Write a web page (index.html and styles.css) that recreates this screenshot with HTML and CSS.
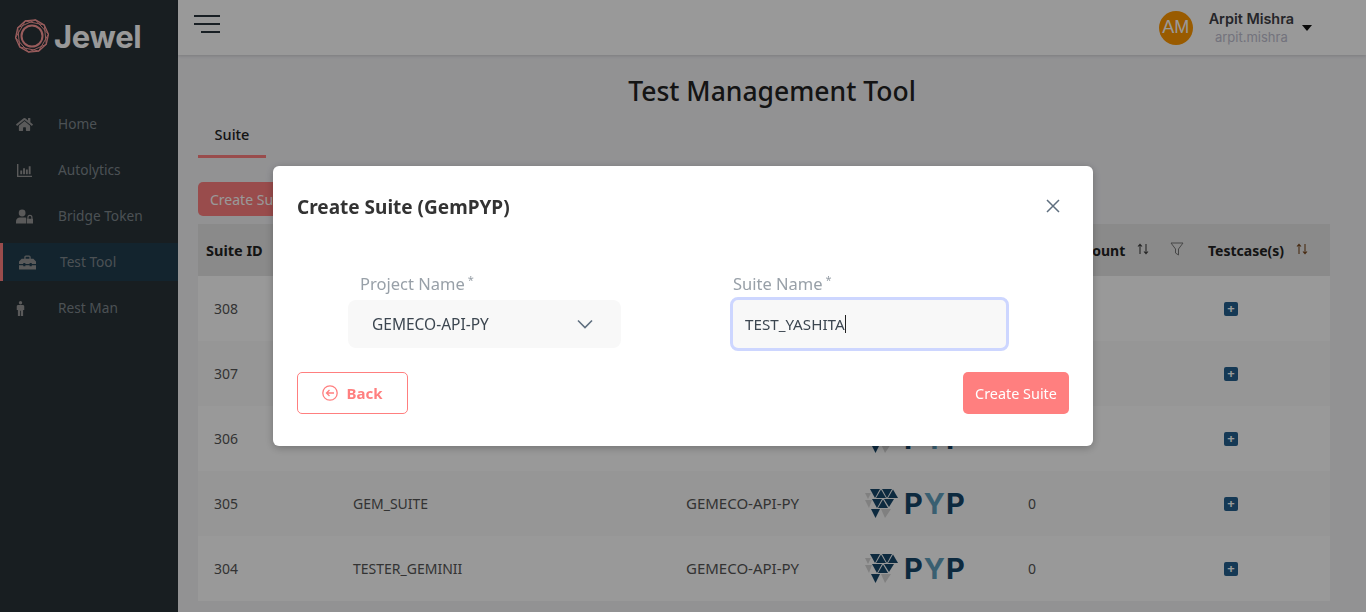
FILE: index.html
```html
<!DOCTYPE html>
<html lang="en">
<head>
	<meta charset="UTF-8">
	<title>Test Management Tool</title>
	<link rel="stylesheet" href="styles.css">
</head>
<body>
<svg class="defs" width="0" height="0">
	<symbol id="pyp-gem" viewBox="0 0 33 29">
		<g fill="#d6d6d6">
			<polygon points="0,4 6,4 3,10"/>
			<polygon points="0,11 7,11 4,19"/>
			<polygon points="16,20 26,20 20,29"/>
		</g>
		<g fill="#16466a">
			<polygon points="5,0 15,0 10,9"/>
			<polygon points="11,9 16,.5 21,9"/>
			<polygon points="17,0 27,0 22,9"/>
			<polygon points="23,9 28,.5 33,9"/>
			<polygon points="7,10 17,10 12,19"/>
			<polygon points="13,19 18,10.500 23,19"/>
			<polygon points="19,10 29,10 24,18"/>
			<polygon points="6,20 15,20 10.500,29"/>
		</g>
	</symbol>
</svg>

<div class="app">
	<aside class="sidebar">
		<div class="brand">
			<svg class="brand-mark" viewBox="0 0 34 34" fill="none" stroke="#ff9a9a" stroke-width=".9">
				<circle cx="17" cy="17" r="10.500" stroke-width="2"/>
				<g transform="rotate(12 17 17)">
					<polygon points="17,.5 32.700,11.900 26.700,30.300 7.300,30.300 1.300,11.900"/>
					<polygon points="26.700,3.700 32.700,22.100 17,33.500 1.300,22.100 7.300,3.700"/>
					<polygon points="17,.5 26.700,3.700 32.700,11.900 32.700,22.100 26.700,30.300 17,33.500 7.300,30.300 1.300,22.100 1.300,11.900 7.300,3.700" stroke-width="1.300"/>
				</g>
			</svg>
			<span class="brand-name">Jewel</span>
		</div>
		<nav class="nav">
			<a class="nav-item">
				<svg class="nav-icon" viewBox="0 0 576 512"><path d="M280.37 148.26L96 300.11V464a16 16 0 0 0 16 16l112.06-.29a16 16 0 0 0 15.92-16V368a16 16 0 0 1 16-16h64a16 16 0 0 1 16 16v95.64a16 16 0 0 0 16 16.05L464 480a16 16 0 0 0 16-16V300L295.67 148.26a12.19 12.19 0 0 0-15.3 0zM571.6 251.47L488 182.56V44.05a12 12 0 0 0-12-12h-56a12 12 0 0 0-12 12v72.61L318.47 43a48 48 0 0 0-61 0L4.34 251.47a12 12 0 0 0-1.6 16.9l25.5 31A12 12 0 0 0 45.15 301l235.22-193.74a12.19 12.19 0 0 1 15.3 0L530.9 301a12 12 0 0 0 16.9-1.6l25.5-31a12 12 0 0 0-1.7-16.93z"/></svg>
				<span>Home</span>
			</a>
			<a class="nav-item">
				<svg class="nav-icon" viewBox="0 0 16 16"><path d="M0 1h1.500v12.500H16V15H0z"/><path d="M3.500 8h2v4h-2zM6.500 5.500h2V12h-2zM9.500 7h2v5h-2zM12.500 3.500h2V12h-2z"/></svg>
				<span>Autolytics</span>
			</a>
			<a class="nav-item">
				<svg class="nav-icon" viewBox="0 0 18 15"><circle cx="6.500" cy="3.800" r="3.600"/><path d="M0 15v-2.500C0 10 2 8.500 4 8.500h5c.8 0 1.300.2 1.800.4V15z"/><path d="M12 10h-.5v5H18v-5h-.5V8.500a2.700 2.700 0 0 0-5.500 0zm1.300 0V8.500a1.400 1.400 0 0 1 2.900 0V10z"/></svg>
				<span>Bridge Token</span>
			</a>
			<a class="nav-item nav-item-active">
				<svg class="nav-icon" viewBox="0 0 16 13"><path d="M5 3V1.500C5 .7 5.700 0 6.500 0h3c.8 0 1.500.7 1.500 1.500V3h2.500L16 5.500V8h-4V7h-2v1H6V7H4v1H0V5.500L2.500 3zm1.200 0h3.600V1.200H6.200z"/><path d="M0 9h4v1h2V9h4v1h2V9h4v4H0z"/></svg>
				<span>Test Tool</span>
			</a>
			<a class="nav-item">
				<svg class="nav-icon nav-icon-man" viewBox="0 0 8 16"><circle cx="4" cy="1.800" r="1.800"/><path d="M1.500 4.200h5c.8 0 1.500.7 1.500 1.500v4H6.800V16H4.400v-5.500h-.8V16H1.200V9.700H0v-4c0-.8.700-1.500 1.500-1.500z"/></svg>
				<span>Rest Man</span>
			</a>
		</nav>
	</aside>

	<div class="main">
		<header class="topbar">
			<button class="menu-toggle" type="button" aria-label="Menu">
				<span></span><span></span><span></span>
			</button>
			<div class="user">
				<div class="avatar">AM</div>
				<div class="user-text">
					<div class="user-name">Arpit Mishra</div>
					<div class="user-login">arpit.mishra</div>
				</div>
				<span class="user-caret"></span>
			</div>
		</header>

		<main class="content">
			<h1 class="page-title">Test Management Tool</h1>
			<div class="tabs"><div class="tab">Suite</div></div>
			<button class="btn-create" type="button">Create Suite</button>
			<table class="suite-table">
				<colgroup>
					<col class="col-id"><col class="col-name"><col class="col-project"><col class="col-framework"><col class="col-count"><col class="col-cases">
				</colgroup>
				<thead>
					<tr>
						<th class="th-id">Suite ID</th>
						<th></th>
						<th></th>
						<th></th>
						<th>
							<div class="th-inner">Testcase Count
								<svg class="sort-icon" viewBox="0 0 12 12"><path d="M3 11V1.500M1 3.500l2-2.200 2 2.200M9 1v9.500M7 8.500l2 2.200 2-2.200"/></svg>
								<svg class="filter-icon" viewBox="0 0 14 14"><path d="M1 1h12L8.500 7v6l-3-2V7z"/></svg>
							</div>
						</th>
						<th>
							<div class="th-inner">Testcase(s)
								<svg class="sort-icon sort-icon-active" viewBox="0 0 12 12"><path d="M3 11V1.500M1 3.500l2-2.200 2 2.200M9 1v9.500M7 8.500l2 2.200 2-2.200"/></svg>
							</div>
						</th>
					</tr>
				</thead>
				<tbody>
					<!-- the modal covers the middle of the first three rows -->
					<tr>
						<td>308</td><td></td><td></td><td></td><td></td>
						<td class="cell-add"><span class="add-box">+</span></td>
					</tr>
					<tr>
						<td>307</td><td></td><td></td><td></td><td></td>
						<td class="cell-add"><span class="add-box">+</span></td>
					</tr>
					<tr>
						<td>306</td><td></td><td></td>
						<td><div class="pyp"><svg class="pyp-gem"><use href="#pyp-gem"/></svg><span class="pyp-text">P<b>Y</b>P</span></div></td>
						<td></td>
						<td class="cell-add"><span class="add-box">+</span></td>
					</tr>
					<tr>
						<td>305</td><td>GEM_SUITE</td><td class="cell-project">GEMECO-API-PY</td>
						<td><div class="pyp"><svg class="pyp-gem"><use href="#pyp-gem"/></svg><span class="pyp-text">P<b>Y</b>P</span></div></td>
						<td>0</td><td class="cell-add"><span class="add-box">+</span></td>
					</tr>
					<tr>
						<td>304</td><td>TESTER_GEMINII</td><td class="cell-project">GEMECO-API-PY</td>
						<td><div class="pyp"><svg class="pyp-gem"><use href="#pyp-gem"/></svg><span class="pyp-text">P<b>Y</b>P</span></div></td>
						<td>0</td><td class="cell-add"><span class="add-box">+</span></td>
					</tr>
				</tbody>
			</table>
		</main>
	</div>
</div>

<div class="backdrop"></div>

<section class="modal">
	<div class="modal-head">
		<h2 class="modal-title">Create Suite (GemPYP)</h2>
		<svg class="modal-close" viewBox="0 0 14 14"><path d="M1 1l12 12M13 1L1 13"/></svg>
	</div>
	<div class="modal-fields">
		<div class="form-field form-field-project">
			<label class="field-label">Project Name<sup>*</sup></label>
			<div class="select-box">
				<span>GEMECO-API-PY</span>
				<svg class="chevron" viewBox="0 0 16 10"><path d="M1 1.500l7 7 7-7"/></svg>
			</div>
		</div>
		<div class="form-field form-field-suite">
			<label class="field-label">Suite Name<sup>*</sup></label>
			<div class="text-box"><span>TEST_YASHITA</span><span class="caret"></span></div>
		</div>
	</div>
	<div class="modal-actions">
		<button class="btn-back" type="button">
			<svg class="back-icon" viewBox="0 0 16 16"><circle cx="8" cy="8" r="7.200"/><path d="M12 8H4.500M7.500 5L4.500 8l3 3"/></svg>
			Back
		</button>
		<button class="btn-submit" type="button">Create Suite</button>
	</div>
</section>
</body>
</html>
```

FILE: styles.css
```css
* {
	box-sizing: border-box;
}
html,
body {
	height: 100%;
	margin: 0;
	overflow: hidden;
}
body {
	font-family: "Noto Sans", "Open Sans", sans-serif;
	font-size: 14px;
	color: #333;
	background: #f3f3f6;
}
.defs {
	position: absolute;
}
.app {
	display: flex;
	height: 612px;
}

/* sidebar */
.sidebar {
	width: 178px;
	flex: none;
	background: #283238;
}
.brand {
	display: flex;
	align-items: center;
	gap: 5px;
	height: 72px;
	padding-left: 15px;
}
.brand-mark {
	width: 34px;
	height: 34px;
}
.brand-name {
	font-family: Inter, sans-serif;
	font-size: 31px;
	font-weight: 700;
	letter-spacing: -0.3px;
	color: #fff;
}
.nav {
	margin-top: 29px;
}
.nav-item {
	display: flex;
	align-items: center;
	height: 46px;
	padding-left: 16px;
	font-size: 13.700px;
	color: #7f888d;
}
.nav-item span {
	margin-top: -2px;
}
.nav-icon {
	width: 17px;
	height: 15px;
	margin-right: 25px;
	flex: none;
	fill: #969696;
}
.nav-icon-man {
	width: 9px;
	margin-right: 33px;
}
.nav-item-active {
	height: 38px;
	margin: 4px 0;
	border-left: 3px solid #ff7f7f;
	background: #213c4d;
}
.nav-item-active .nav-icon {
	margin-right: 24px;
}

/* top bar */
.main {
	flex: 1;
	min-width: 0;
}
.topbar {
	display: flex;
	align-items: center;
	justify-content: space-between;
	height: 55px;
	padding: 0 54px 0 16px;
	background: #fff;
	box-shadow: 0 1px 3px rgba(0, 0, 0, .15);
}
.menu-toggle {
	display: flex;
	flex-direction: column;
	align-items: flex-end;
	gap: 6.500px;
	width: 26px;
	margin-top: -7px;
	padding: 0;
	border: 0;
	background: none;
}
.menu-toggle span {
	display: block;
	width: 100%;
	height: 1.500px;
	background: #28343c;
}
.menu-toggle span:last-child {
	width: 19px;
}
.user {
	display: flex;
	align-items: center;
}
.avatar {
	display: flex;
	align-items: center;
	justify-content: center;
	width: 34px;
	height: 34px;
	border-radius: 50%;
	background: #ff9800;
	color: #fff;
	font-family: "Liberation Sans", sans-serif;
	font-size: 18px;
}
.user-text {
	margin: 1px 0 0 16px;
	text-align: center;
}
.user-name {
	font-family: Inter, sans-serif;
	font-size: 14.400px;
	font-weight: 600;
	line-height: 19px;
	color: #3f3f46;
}
.user-login {
	font-family: Inter, sans-serif;
	font-size: 13px;
	line-height: 19px;
	color: #c0c0d0;
}
.user-caret {
	width: 0;
	height: 0;
	margin: 0 0 0 8px;
	border: 5px solid transparent;
	border-top: 6px solid #111;
	border-bottom: 0;
}

/* page content */
.content {
	padding: 0 20px;
}
.page-title {
	margin: 18px 0 0;
	font-size: 26.500px;
	font-weight: 500;
	line-height: 36px;
	text-align: center;
	color: #222;
}
.tabs {
	display: flex;
	margin-top: 10px;
}
.tab {
	width: 68px;
	height: 39px;
	padding-top: 6px;
	border-bottom: 3px solid #ff7f7f;
	font-size: 14.500px;
	font-weight: 500;
	line-height: 19px;
	text-align: center;
	color: #222;
}
.btn-create {
	display: block;
	height: 34px;
	margin-top: 24px;
	padding: 0 12px;
	border: 0;
	border-radius: 5px;
	background: #ff7f7f;
	color: #fff;
	font: inherit;
}
.suite-table {
	width: 1132px;
	margin-top: 8px;
	table-layout: fixed;
	border-collapse: collapse;
	background: #fff;
}
.col-id { width: 139px; }
.col-name { width: 333px; }
.col-project { width: 181px; }
.col-framework { width: 161px; }
.col-count { width: 188px; }
.col-cases { width: 130px; }
.suite-table th {
	height: 52px;
	padding: 0 8px;
	background: #e6e6e6;
	font-weight: 700;
	text-align: left;
	color: #222;
}
.suite-table .th-id {
	font-size: 14.500px;
}
.suite-table td {
	height: 65px;
	padding: 0 16px;
	color: #555;
}
.suite-table .cell-project {
	padding-bottom: 2px;
	font-size: 15px;
}
.suite-table tbody tr:nth-child(even) {
	background: #fafafa;
}
.th-inner {
	display: flex;
	align-items: center;
}
.sort-icon {
	width: 12px;
	height: 12px;
	margin: -2px 0 0 12px;
	fill: none;
	stroke: #444;
	stroke-width: 1.100;
}
.sort-icon-active {
	stroke: #7a4a20;
}
.filter-icon {
	width: 14px;
	height: 14px;
	margin: -3px 0 0 21px;
	fill: none;
	stroke: #777;
}
.pyp {
	display: flex;
	align-items: center;
	margin-left: -2px;
}
.pyp-gem {
	width: 33px;
	height: 29px;
}
.pyp-text {
	margin-left: 6px;
	font-family: Inter, sans-serif;
	font-size: 29px;
	font-weight: 700;
	line-height: 30px;
	letter-spacing: 1px;
	color: #16466a;
}
.pyp-text b {
	font-weight: 700;
	color: #5f9fbd;
}
.cell-add {
	padding-left: 24px !important;
}
.add-box {
	display: flex;
	align-items: center;
	justify-content: center;
	width: 14px;
	height: 14px;
	border-radius: 2px;
	background: #235f8e;
	color: #fff;
	font-size: 13px;
	font-weight: 700;
	line-height: 1;
}

/* modal */
.backdrop {
	position: fixed;
	inset: 0;
	background: rgba(0, 0, 0, .4);
}
.modal {
	position: fixed;
	top: 166px;
	left: 273px;
	width: 820px;
	height: 280px;
	padding: 0 24px;
	border-radius: 6px;
	background: #fff;
	box-shadow: 0 2px 8px rgba(0, 0, 0, .25);
}
.modal-head {
	display: flex;
	align-items: center;
	justify-content: space-between;
	height: 82px;
	padding-right: 9px;
}
.modal-title {
	margin: 0;
	font-size: 19px;
	font-weight: 700;
	color: #333;
}
.modal-close {
	width: 14px;
	height: 14px;
	margin-top: -2px;
	fill: none;
	stroke: #5f6f7f;
	stroke-width: 1.500;
}
.modal-fields {
	display: flex;
	height: 124px;
	padding: 22px 0 0 51px;
}
.form-field-project {
	width: 273px;
}
.form-field-suite {
	width: 279px;
	margin-left: 109px;
}
.field-label {
	display: block;
	margin-bottom: 2px;
	padding-left: 12px;
	font-size: 16.500px;
	line-height: 28px;
	color: #98a0a8;
}
.form-field-suite .field-label {
	padding-left: 3px;
}
.field-label sup {
	margin-left: 3px;
	font-size: 11px;
	line-height: 0;
}
.select-box {
	display: flex;
	align-items: center;
	justify-content: space-between;
	height: 48px;
	padding: 0 28px 0 24px;
	border-radius: 8px;
	background: #f8f8f8;
	font-size: 15.500px;
	color: #3c4650;
}
.chevron {
	width: 16px;
	height: 10px;
	fill: none;
	stroke: #5f6f7f;
	stroke-width: 1.600;
}
.text-box {
	display: flex;
	align-items: center;
	height: 54px;
	margin-top: -3px;
	padding-left: 12px;
	border: 3px solid #cdd6ff;
	border-radius: 8px;
	background: #f8f8f8;
	font-size: 15.200px;
	color: #3c4650;
}
.caret {
	width: 1px;
	height: 18px;
	background: #222;
}
.modal-actions {
	display: flex;
	justify-content: space-between;
}
.btn-back,
.btn-submit {
	height: 42px;
	border-radius: 5px;
	font: inherit;
}
.btn-back {
	display: flex;
	align-items: center;
	justify-content: center;
	gap: 8px;
	width: 111px;
	border: 1px solid #ff7f7f;
	background: #fff;
	color: #ff7f7f;
	font-size: 15px;
	font-weight: 700;
}
.back-icon {
	width: 16px;
	height: 16px;
	fill: none;
	stroke: #ff7f7f;
	stroke-width: 1.300;
}
.btn-submit {
	width: 106px;
	border: 0;
	background: #ff7f7f;
	color: #fff;
	font-size: 14.400px;
}
```
